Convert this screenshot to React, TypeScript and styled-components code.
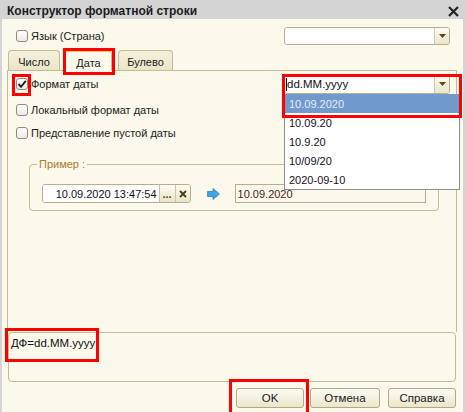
import React from "react";
import styled, { createGlobalStyle } from "styled-components";

const GlobalStyle = createGlobalStyle`
  html, body {
    margin: 0;
    padding: 0;
    background: #d4d4d4;
  }
  * {
    box-sizing: border-box;
  }
  body {
    font-family: "Liberation Sans", Arial, sans-serif;
    font-size: 11px;
    color: #1a1a1a;
  }
`;

const TAN = "#c5ba90";

const Window = styled.div`
  width: 466px;
  height: 412px;
  display: flex;
  flex-direction: column;
  background: #d4d4d4;
  padding: 0 3px 0 2px;
  overflow: hidden;
`;

const TitleBar = styled.div`
  height: 19px;
  flex: none;
  display: flex;
  align-items: center;
  justify-content: space-between;
  padding: 3px 4px 0 5px;
  font: bold 12px "Liberation Sans", Arial, sans-serif;
  color: #1b1b1b;
`;

const Body = styled.div`
  flex: 1;
  display: flex;
  flex-direction: column;
  background: #fbf9eb;
  padding: 8px 6px 4px 5px;
  min-height: 0;
`;

const TopRow = styled.div`
  height: 18px;
  display: flex;
  align-items: center;
  justify-content: space-between;
  padding: 0 7px 0 9px;
`;

const CheckLabel = styled.label`
  position: relative;
  display: flex;
  align-items: center;
  gap: 3px;
  white-space: nowrap;
  color: #222;
`;

const BoxWrap = styled.span`
  position: relative;
  display: flex;
`;

const Box = styled.span`
  width: 12px;
  height: 12px;
  border: 1px solid #8e8a7c;
  border-radius: 3px;
  background: linear-gradient(#ffffff, #ecebe6);
  display: flex;
  align-items: center;
  justify-content: center;
`;

const Mark = styled.span<{ $t: number; $l: number; $w: number; $h: number }>`
  position: absolute;
  top: ${(p) => p.$t}px;
  left: ${(p) => p.$l}px;
  width: ${(p) => p.$w}px;
  height: ${(p) => p.$h}px;
  border: 3px solid #ff0000;
  pointer-events: none;
  z-index: 10;
`;

const Combo = styled.div<{ $w: number; $h: number }>`
  position: relative;
  width: ${(p) => p.$w}px;
  height: ${(p) => p.$h}px;
  display: flex;
  background: #fff;
  border: 1px solid #b9ae85;
  border-radius: 3px;
`;

const ComboText = styled.div`
  flex: 1;
  display: flex;
  align-items: center;
  padding-left: 1px;
  color: #111;
  font-size: 11.5px;
`;

const Caret = styled.span`
  width: 1px;
  height: 13px;
  background: #000;
`;

const DropButton = styled.div`
  width: 15px;
  border-left: 1px solid #d2c9a4;
  border-radius: 0 2px 2px 0;
  background: linear-gradient(#fdfcf5, #ebe5cc);
  display: flex;
  align-items: center;
  justify-content: center;
`;

const DropList = styled.div`
  position: absolute;
  top: 19px;
  left: -1px;
  width: 176px;
  border: 1px solid #8d8d8d;
  border-top: none;
  background: #fff;
  z-index: 5;
`;

const DropItem = styled.div<{ $selected?: boolean }>`
  height: 19px;
  display: flex;
  align-items: center;
  padding-left: 4px;
  font-size: 11px;
  background: ${(p) => (p.$selected ? "#7099cc" : "#fff")};
  color: ${(p) => (p.$selected ? "#e6ecf6" : "#1a0c1a")};
`;

const TabStrip = styled.div`
  position: relative;
  z-index: 2;
  margin-top: 5px;
  height: 20px;
  display: flex;
  align-items: flex-end;
  padding-left: 1px;
`;

const Tab = styled.div<{ $active?: boolean; $w: number; $mr: number }>`
  position: relative;
  width: ${(p) => p.$w}px;
  margin-right: ${(p) => p.$mr}px;
  height: ${(p) => (p.$active ? 21 : 20)}px;
  margin-bottom: ${(p) => (p.$active ? -1 : 0)}px;
  display: flex;
  align-items: center;
  justify-content: center;
  padding-top: 2px;
  border: 1px solid ${TAN};
  border-bottom: none;
  border-top: ${(p) => (p.$active ? "2px solid #f2c35c" : `1px solid ${TAN}`)};
  border-radius: 4px 4px 0 0;
  background: ${(p) =>
    p.$active ? "#fbf9eb" : "linear-gradient(#f4f0db, #ebe5c9)"};
`;

const Panel = styled.div`
  flex: 1;
  display: flex;
  flex-direction: column;
  border: 1px solid ${TAN};
  border-bottom: none;
  padding: 2px 6px 0 8px;
  min-height: 0;
`;

const FieldRow = styled.div<{ $mt: number }>`
  height: 20px;
  margin-top: ${(p) => p.$mt}px;
  display: flex;
  align-items: center;
  justify-content: space-between;
`;

const Group = styled.fieldset`
  margin: 14px 11px 0 13px;
  padding: 13px 12px 7px 12px;
  border: 1px solid ${TAN};
  border-radius: 4px;
  min-width: 0;
`;

const Legend = styled.legend`
  padding: 0 2px;
  margin-left: -5px;
  line-height: 14px;
  color: #a97b2c;
  font-size: 11px;
`;

const SampleRow = styled.div`
  display: flex;
  align-items: center;
  height: 19px;
`;

const DateField = styled.div`
  width: 149px;
  height: 19px;
  display: flex;
  border: 1px solid #b9ae85;
  border-radius: 3px;
  overflow: hidden;
`;

const DateText = styled.div`
  flex: 1;
  background: #fff;
  display: flex;
  align-items: center;
  justify-content: flex-end;
  padding-right: 2px;
  font-size: 11px;
  color: #111;
`;

const FieldButton = styled.div<{ $w: number }>`
  width: ${(p) => p.$w}px;
  border-left: 1px solid #cfc6a0;
  background: linear-gradient(#fdfcf3, #e9e3c8);
  display: flex;
  align-items: center;
  justify-content: center;
  font-weight: bold;
  color: #4a3c12;
`;

const Result = styled.div`
  margin-left: 15px;
  width: 192px;
  height: 19px;
  border: 1px solid #b9ae85;
  display: flex;
  align-items: center;
  padding-left: 2px;
  color: #4e1c1c;
  font-size: 11px;
`;

const Memo = styled.div`
  position: relative;
  height: 50px;
  margin: 0 1px;
  flex: none;
  border: 1px solid ${TAN};
  border-radius: 4px;
  padding: 4px 2px;
  line-height: 13px;
  font-size: 11.5px;
  color: #111;
`;

const ButtonRow = styled.div`
  margin-top: 6px;
  height: 20px;
  flex: none;
  display: flex;
  justify-content: flex-end;
  gap: 6px;
  padding-right: 1px;
`;

const Button = styled.button<{ $w: number; $ml?: number }>`
  position: relative;
  width: ${(p) => p.$w}px;
  height: 20px;
  margin-left: ${(p) => p.$ml ?? 0}px;
  padding: 0;
  border: 1px solid #b3a881;
  border-radius: 3px;
  background: linear-gradient(#fdfcf4, #ebe5cb);
  font: 11.5px "Liberation Sans", Arial, sans-serif;
  color: #1a1a1a;
`;

const Triangle = () => (
  <svg width="7" height="4" viewBox="0 0 7 4">
    <polygon points="0,0 7,0 3.5,4" fill="#5a4810" />
  </svg>
);

const Check = () => (
  <svg width="10" height="10" viewBox="0 0 10 10">
    <polyline
      points="1.5,5 4,7.8 8.8,1.8"
      fill="none"
      stroke="#222"
      strokeWidth="1.9"
    />
  </svg>
);

const CloseIcon = () => (
  <svg width="11" height="11" viewBox="0 0 11 11">
    <path d="M1 1 L10 10 M10 1 L1 10" stroke="#262626" strokeWidth="2.3" />
  </svg>
);

const ClearIcon = () => (
  <svg width="8" height="8" viewBox="0 0 8 8">
    <path d="M1 1 L7 7 M7 1 L1 7" stroke="#4a3c12" strokeWidth="1.8" />
  </svg>
);

const Arrow = () => (
  <svg width="13" height="12" viewBox="0 0 13 12" style={{ marginLeft: 16 }}>
    <polygon
      points="0.5,3.5 6,3.5 6,0.5 12.5,6 6,11.5 6,8.5 0.5,8.5"
      fill="#41a4e4"
      stroke="#2b86c8"
      strokeWidth="0.8"
    />
  </svg>
);

const CheckBox = ({
  checked,
  label,
  marked,
}: {
  checked?: boolean;
  label: string;
  marked?: boolean;
}) => (
  <CheckLabel>
    <BoxWrap>
      <Box>{checked && <Check />}</Box>
      {marked && <Mark $t={-4} $l={-4} $w={19} $h={22} />}
    </BoxWrap>
    {label}
  </CheckLabel>
);

const formats = ["10.09.2020", "10.09.20", "10.9.20", "10/09/20", "2020-09-10"];

export default function App() {
  return (
    <>
      <GlobalStyle />
      <Window>
        <TitleBar>
          <span>Конструктор форматной строки</span>
          <CloseIcon />
        </TitleBar>
        <Body>
          <TopRow>
            <CheckBox label="Язык (Страна)" />
            <Combo $w={166} $h={18}>
              <ComboText />
              <DropButton>
                <Triangle />
              </DropButton>
            </Combo>
          </TopRow>

          <TabStrip>
            <Tab $w={52} $mr={5}>Число</Tab>
            <Tab $w={47} $mr={6} $active>
              Дата
              <Mark $t={-4} $l={-3} $w={52} $h={27} />
            </Tab>
            <Tab $w={55} $mr={0}>Булево</Tab>
          </TabStrip>

          <Panel>
            <FieldRow $mt={1}>
              <CheckBox label="Формат даты" checked marked />
              <Combo $w={166} $h={20}>
                <ComboText>
                  <Caret />
                  dd.MM.yyyy
                </ComboText>
                <DropButton>
                  <Triangle />
                </DropButton>
                <DropList>
                  {formats.map((f, i) => (
                    <DropItem key={f} $selected={i === 0}>
                      {f}
                    </DropItem>
                  ))}
                </DropList>
                <Mark $t={-1} $l={-3} $w={180} $h={44} />
              </Combo>
            </FieldRow>
            <FieldRow $mt={6}>
              <CheckBox label="Локальный формат даты" />
            </FieldRow>
            <FieldRow $mt={3}>
              <CheckBox label="Представление пустой даты" />
            </FieldRow>

            <Group>
              <Legend>Пример :</Legend>
              <SampleRow>
                <DateField>
                  <DateText>10.09.2020 13:47:54</DateText>
                  <FieldButton $w={16}>...</FieldButton>
                  <FieldButton $w={15}>
                    <ClearIcon />
                  </FieldButton>
                </DateField>
                <Arrow />
                <Result>10.09.2020</Result>
              </SampleRow>
            </Group>
          </Panel>

          <Memo>
            ДФ=dd.MM.yyyy
            <Mark $t={-5} $l={-4} $w={94} $h={34} />
          </Memo>

          <ButtonRow>
            <Button $w={68}>
              OK
              <Mark $t={-10} $l={-8} $w={80} $h={40} />
            </Button>
            <Button $w={70}>Отмена</Button>
            <Button $w={68} $ml={2}>
              Справка
            </Button>
          </ButtonRow>
        </Body>
      </Window>
    </>
  );
}
